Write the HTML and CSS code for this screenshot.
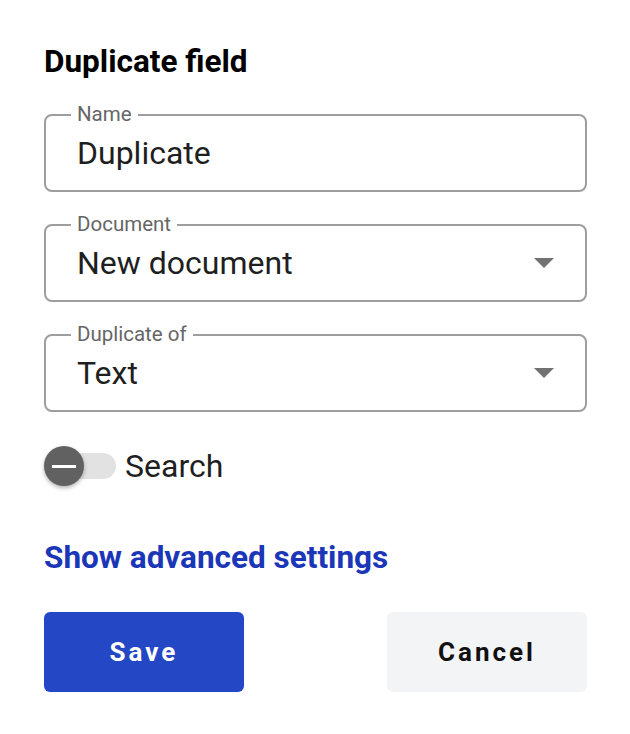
FILE: index.html
```html
<!DOCTYPE html>
<html>
<head>
<meta charset="utf-8">
<link rel="stylesheet" href="styles.css">
</head>
<body>
<div class="dialog">
  <h1 class="title">Duplicate field</h1>
  <div class="fields">
    <div class="field">
      <span class="label">Name</span>
      <span class="value">Duplicate</span>
    </div>
    <div class="field">
      <span class="label">Document</span>
      <span class="value">New document</span>
      <svg class="arrow" width="20" height="10" viewBox="0 0 20 10"><polygon points="0,0 20,0 10,10" fill="#727272"/></svg>
    </div>
    <div class="field">
      <span class="label">Duplicate of</span>
      <span class="value">Text</span>
      <svg class="arrow" width="20" height="10" viewBox="0 0 20 10"><polygon points="0,0 20,0 10,10" fill="#727272"/></svg>
    </div>
  </div>
  <div class="toggle-row">
    <div class="toggle">
      <div class="track"></div>
      <div class="knob"><span class="minus"></span></div>
    </div>
    <span class="toggle-label">Search</span>
  </div>
  <a class="link">Show advanced settings</a>
  <div class="buttons">
    <button class="btn btn-primary">Save</button>
    <button class="btn btn-secondary">Cancel</button>
  </div>
</div>
</body>
</html>
```

FILE: styles.css
```css
* { box-sizing: border-box; }
html, body { margin: 0; padding: 0; background: #fff; }
body { font-family: Roboto, "Liberation Sans", Arial, sans-serif; color: #1f1f1f; }
.dialog {
  width: 630px;
  padding: 44px 43px 0 44px;
  display: flex;
  flex-direction: column;
}
.title {
  margin: 0;
  font-size: 31.5px;
  line-height: 36px;
  font-weight: 700;
  color: #000;
}
.fields {
  margin-top: 34px;
  display: flex;
  flex-direction: column;
  gap: 32px;
}
.field {
  position: relative;
  height: 78px;
  border: 2px solid #9e9e9e;
  border-radius: 8px;
  display: flex;
  align-items: center;
  justify-content: space-between;
  padding: 0 31px 0 31px;
}
.label {
  position: absolute;
  top: -14px;
  left: 25px;
  padding: 0 6px;
  background: #fff;
  font-size: 20.5px;
  line-height: 24px;
  color: #666;
}
.value {
  font-size: 32px;
  line-height: 38px;
  color: #1f1f1f;
}
.arrow { display: block; }
.toggle-row {
  margin-top: 34px;
  display: flex;
  align-items: center;
  gap: 9px;
  height: 40px;
}
.toggle {
  position: relative;
  width: 72px;
  height: 40px;
  display: flex;
  align-items: center;
}
.track {
  margin-left: 4px;
  width: 68px;
  height: 26px;
  border-radius: 13px;
  background: #e2e2e2;
}
.knob {
  position: absolute;
  left: 0;
  top: 0;
  width: 40px;
  height: 40px;
  border-radius: 50%;
  background: #616161;
  box-shadow: 0 2px 4px rgba(0,0,0,0.3);
  display: flex;
  align-items: center;
  justify-content: center;
}
.minus {
  width: 24px;
  height: 3px;
  background: #fff;
}
.toggle-label {
  font-size: 32px;
  line-height: 38px;
  color: #1f1f1f;
}
.link {
  margin-top: 54px;
  font-size: 31.5px;
  line-height: 36px;
  font-weight: 700;
  color: #1b37b7;
  cursor: pointer;
}
.buttons {
  margin-top: 36px;
  display: flex;
  justify-content: space-between;
}
.btn {
  width: 200px;
  height: 80px;
  border: none;
  border-radius: 6px;
  font-family: Roboto, "Liberation Sans", Arial, sans-serif;
  font-size: 26px;
  font-weight: 700;
  letter-spacing: 3px;
}
.btn-primary { background: #2447c5; color: #fff; }
.btn-secondary { background: #f3f4f6; color: #111; }
```
